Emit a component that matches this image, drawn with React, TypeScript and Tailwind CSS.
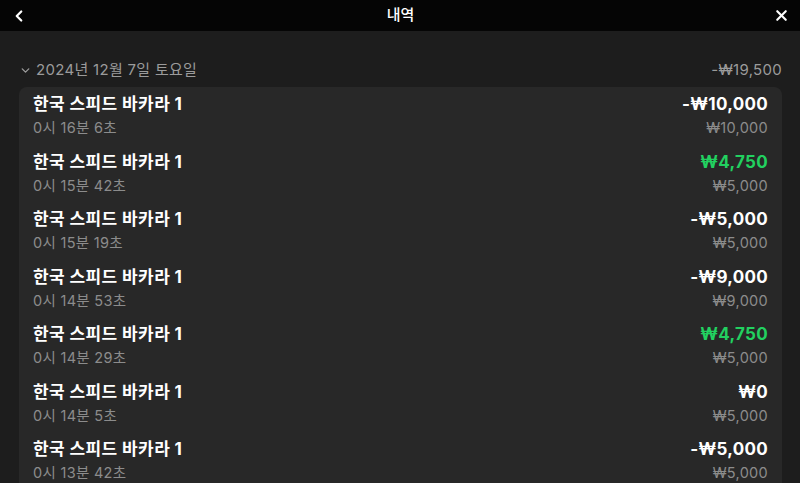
import { ChevronDown, ChevronLeft, X } from 'lucide-react';

type Row = { time: string; amount: string; bet: string; win?: boolean };

const ROWS: Row[] = [
  { time: '0시 16분 6초', amount: '-₩10,000', bet: '₩10,000' },
  { time: '0시 15분 42초', amount: '₩4,750', bet: '₩5,000', win: true },
  { time: '0시 15분 19초', amount: '-₩5,000', bet: '₩5,000' },
  { time: '0시 14분 53초', amount: '-₩9,000', bet: '₩9,000' },
  { time: '0시 14분 29초', amount: '₩4,750', bet: '₩5,000', win: true },
  { time: '0시 14분 5초', amount: '₩0', bet: '₩5,000' },
  { time: '0시 13분 42초', amount: '-₩5,000', bet: '₩5,000' },
];

const FONT = { fontFamily: 'Inter, "Noto Sans CJK KR", sans-serif' };

export default function App() {
  return (
    <div className="h-[483px] w-[800px] overflow-hidden bg-[#1d1d1d] text-white" style={FONT}>
      <header className="flex h-[31px] items-center justify-between bg-[#050505] px-[10px]">
        <ChevronLeft size={18} strokeWidth={3} className="text-white" />
        <span className="text-[15px] font-medium">내역</span>
        <X size={17} strokeWidth={3} className="text-white" />
      </header>

      <div className="pl-[19px] pr-[18px]">
        <div className="flex items-center justify-between pb-[7px] pt-[29px] text-[15px] leading-[20px] tracking-[0.3px] text-[#9b9b9b]">
          <div className="flex items-center gap-[4px]">
            <ChevronDown size={13} strokeWidth={2.5} />
            <span>2024년 12월 7일 토요일</span>
          </div>
          <span>-₩19,500</span>
        </div>

        <div className="rounded-[8px] bg-[#282828] px-[14px]">
          {ROWS.map((r, i) => (
            <div key={i} className="flex h-[57.5px] items-center justify-between">
              <div className="flex flex-col">
                <span className="text-[17px] font-bold leading-[24px] tracking-[0.4px]">한국 스피드 바카라 1</span>
                <span className="text-[14.5px] leading-[23px] tracking-[0.3px] text-[#8c8c8c]">{r.time}</span>
              </div>
              <div className="flex flex-col items-end">
                <span
                  className={`text-[17px] font-bold leading-[24px] tracking-[0.3px] ${r.win ? 'text-[#22d160]' : 'text-white'}`}
                >
                  {r.amount}
                </span>
                <span className="text-[14.5px] leading-[23px] tracking-[0.3px] text-[#8c8c8c]">{r.bet}</span>
              </div>
            </div>
          ))}
        </div>
      </div>
    </div>
  );
}
